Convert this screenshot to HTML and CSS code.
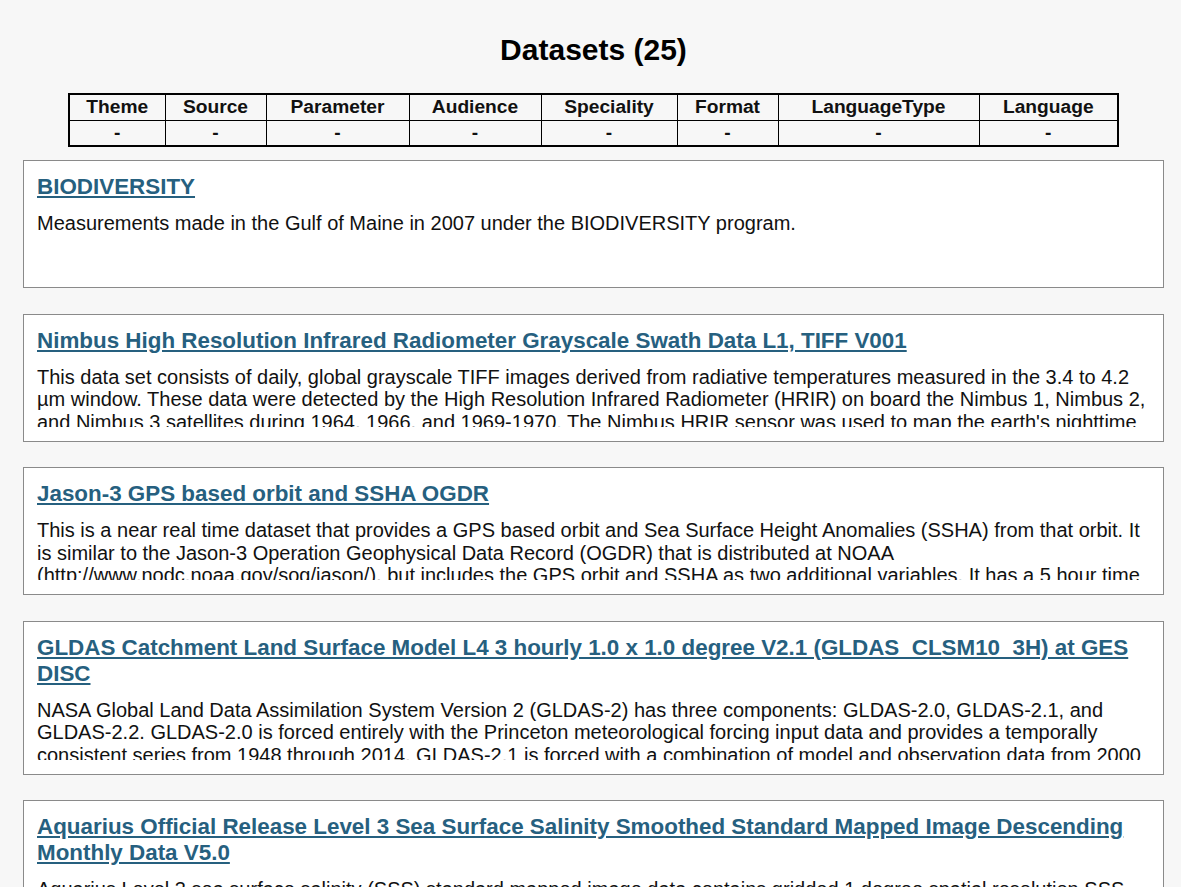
FILE: index.html
```html
<!DOCTYPE html>
<html>
<head>
<meta charset="utf-8">
<title>Datasets</title>
<link rel="stylesheet" href="styles.css">
</head>
<body>
<main class="page">
  <h1 class="page-title">Datasets (25)</h1>
  <table class="facets">
    <thead>
      <tr>
        <th class="c-theme">Theme</th>
        <th class="c-source">Source</th>
        <th class="c-param">Parameter</th>
        <th class="c-aud">Audience</th>
        <th class="c-spec">Speciality</th>
        <th class="c-format">Format</th>
        <th class="c-ltype">LanguageType</th>
        <th class="c-lang">Language</th>
      </tr>
    </thead>
    <tbody>
      <tr>
        <td>-</td><td>-</td><td>-</td><td>-</td><td>-</td><td>-</td><td>-</td><td>-</td>
      </tr>
    </tbody>
  </table>

  <section class="card">
    <h2 class="card-title"><a href="#">BIODIVERSITY</a></h2>
    <p class="card-desc">Measurements made in the Gulf of Maine in 2007 under the BIODIVERSITY program.</p>
  </section>

  <section class="card">
    <h2 class="card-title"><a href="#">Nimbus High Resolution Infrared Radiometer Grayscale Swath Data L1, TIFF V001</a></h2>
    <p class="card-desc">This data set consists of daily, global grayscale TIFF images derived from radiative temperatures measured in the 3.4 to 4.2 µm window. These data were detected by the High Resolution Infrared Radiometer (HRIR) on board the Nimbus 1, Nimbus 2, and Nimbus 3 satellites during 1964, 1966, and 1969-1970. The Nimbus HRIR sensor was used to map the earth's nighttime cloud cover and surface temperatures.</p>
  </section>

  <section class="card">
    <h2 class="card-title"><a href="#">Jason-3 GPS based orbit and SSHA OGDR</a></h2>
    <p class="card-desc">This is a near real time dataset that provides a GPS based orbit and Sea Surface Height Anomalies (SSHA) from that orbit. It is similar to the Jason-3 Operation Geophysical Data Record (OGDR) that is distributed at NOAA (http://www.nodc.noaa.gov/sog/jason/), but includes the GPS orbit and SSHA as two additional variables. It has a 5 hour time latency.</p>
  </section>

  <section class="card">
    <h2 class="card-title"><a href="#">GLDAS Catchment Land Surface Model L4 3 hourly 1.0 x 1.0 degree V2.1 (GLDAS_CLSM10_3H) at GES DISC</a></h2>
    <p class="card-desc">NASA Global Land Data Assimilation System Version 2 (GLDAS-2) has three components: GLDAS-2.0, GLDAS-2.1, and GLDAS-2.2. GLDAS-2.0 is forced entirely with the Princeton meteorological forcing input data and provides a temporally consistent series from 1948 through 2014. GLDAS-2.1 is forced with a combination of model and observation data from 2000 to present.</p>
  </section>

  <section class="card">
    <h2 class="card-title"><a href="#">Aquarius Official Release Level 3 Sea Surface Salinity Smoothed Standard Mapped Image Descending Monthly Data V5.0</a></h2>
    <p class="card-desc">Aquarius Level 3 sea surface salinity (SSS) standard mapped image data contains gridded 1 degree spatial resolution SSS averaged over monthly time scales.</p>
  </section>
</main>
</body>
</html>
```

FILE: styles.css
```css
html, body {
  margin: 0;
  padding: 0;
  background: #f7f7f7;
}

body {
  font-family: Arial, "Liberation Sans", sans-serif;
  color: #111;
}

.page {
  padding: 0 17px 0 23px;
}

.page-title {
  margin: 0 0 25px 0;
  padding-top: 32px;
  text-align: center;
  font-size: 30px;
  line-height: 36px;
  font-weight: bold;
  color: #000;
}

.facets {
  margin: 0 auto;
  border-collapse: collapse;
  border: 2px solid #000;
  font-size: 19.2px;
  background: #f7f7f7;
}

.facets th,
.facets td {
  border: 1px solid #000;
  text-align: center;
  height: 26px;
  padding: 0;
  line-height: 22px;
  box-sizing: border-box;
  font-weight: bold;
  color: #111;
}

.c-theme { width: 96px; }
.c-source { width: 101px; }
.c-param { width: 143px; }
.c-aud { width: 132px; }
.c-spec { width: 136px; }
.c-format { width: 101px; }
.c-ltype { width: 201px; }
.c-lang { width: 139px; }

.card {
  background: #fff;
  border: 1px solid #8a8a8a;
  padding: 13px 13px 14px 13px;
  margin-top: 25.5px;
}

.facets + .card {
  margin-top: 13px;
}

.card-title {
  margin: 0 0 12px 0;
  font-size: 22.4px;
  line-height: 26px;
  font-weight: bold;
}

.card-title a {
  color: #26607f;
  text-decoration: underline;
}

.card-desc {
  margin: 0;
  font-size: 20px;
  line-height: 22.5px;
  height: 61px;
  overflow: hidden;
  color: #111;
}
```
